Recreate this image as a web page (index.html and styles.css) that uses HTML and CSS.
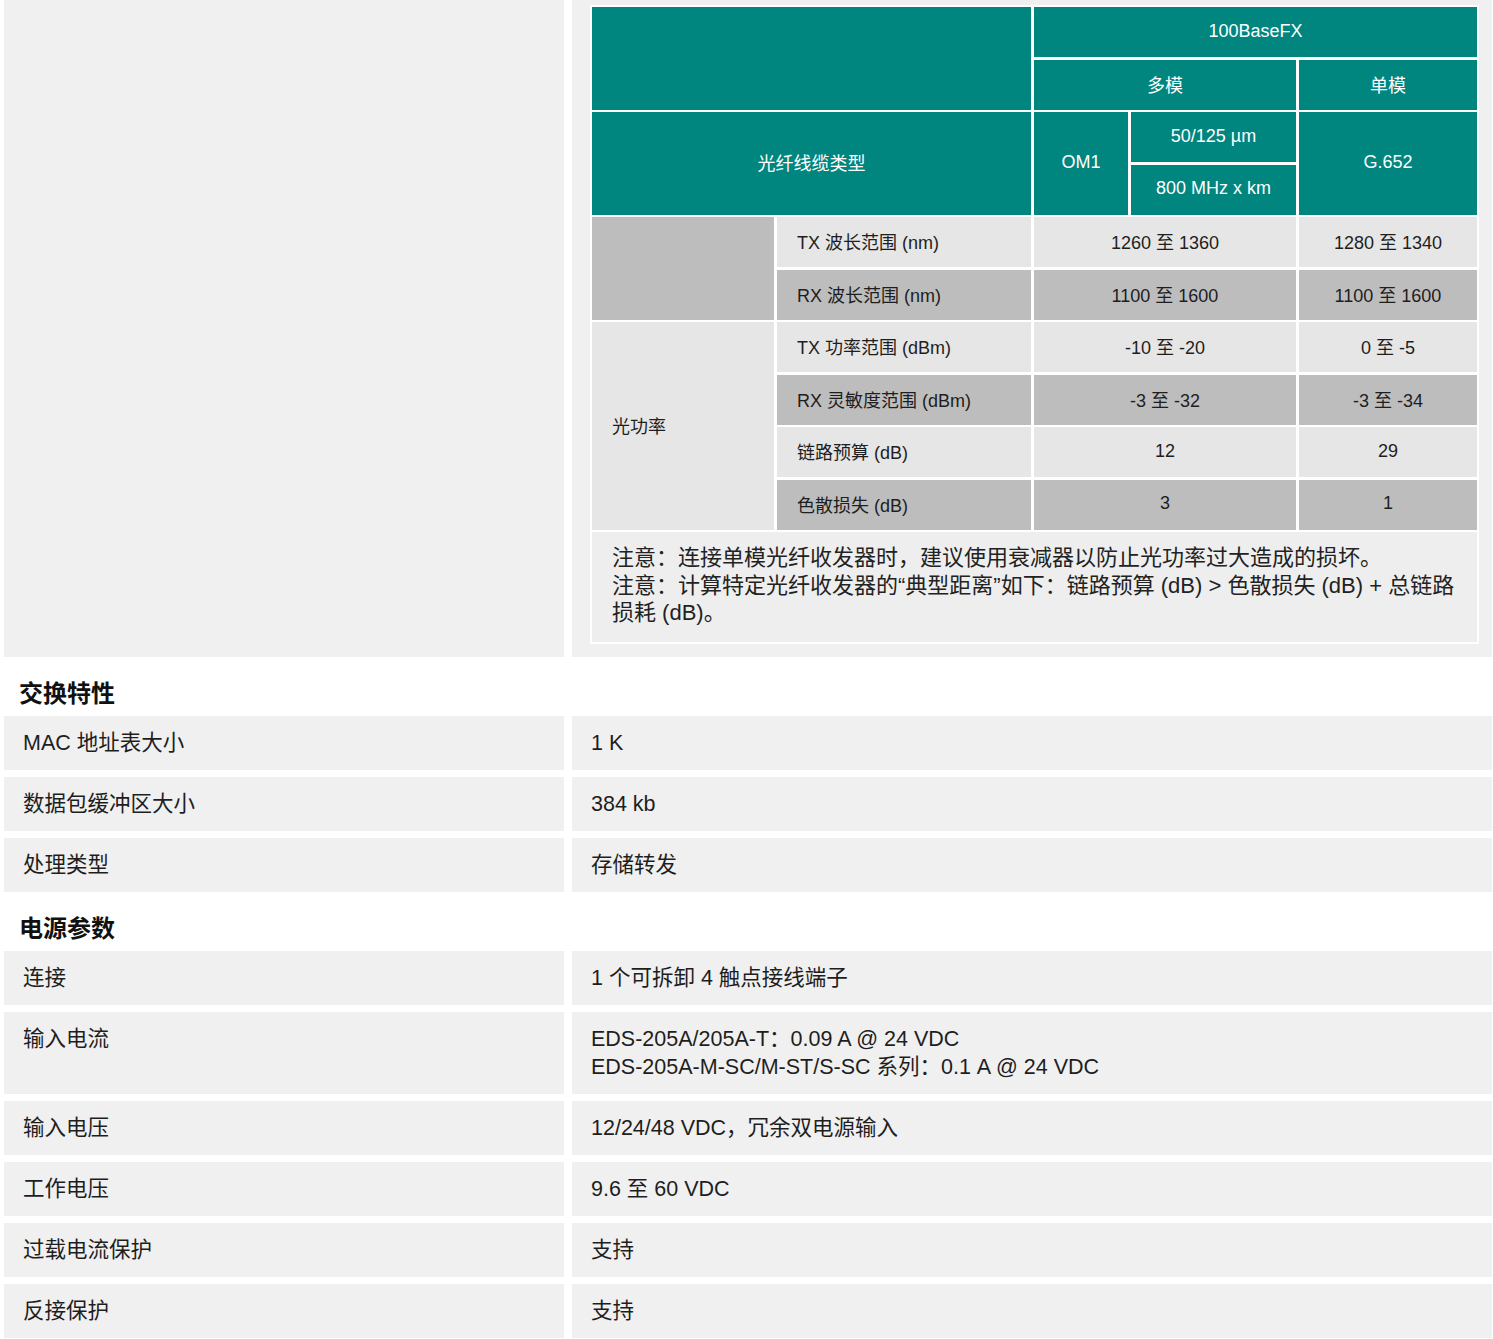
FILE: index.html
```html
<!DOCTYPE html>
<html lang="zh-CN">
<head>
<meta charset="utf-8">
<title>EDS-205A 规格</title>
<link rel="stylesheet" href="styles.css">
</head>
<body>
<div class="page">
  <section class="spec-top">
    <div class="cell key-cell"></div>
    <div class="cell val-cell">
      <div class="fx-table">
        <div class="th c2 r2"></div>
        <div class="th c3">100BaseFX</div>
        <div class="th c2">多模</div>
        <div class="th">单模</div>
        <div class="th c2 r2">光纤线缆类型</div>
        <div class="th r2">OM1</div>
        <div class="th">50/125 µm</div>
        <div class="th r2">G.652</div>
        <div class="th">800 MHz x km</div>

        <div class="td dark r2"></div>
        <div class="td light lbl">TX 波长范围 (nm)</div>
        <div class="td light c2">1260 至 1360</div>
        <div class="td light">1280 至 1340</div>
        <div class="td dark lbl">RX 波长范围 (nm)</div>
        <div class="td dark c2">1100 至 1600</div>
        <div class="td dark">1100 至 1600</div>

        <div class="td light r4 lbl">光功率</div>
        <div class="td light lbl">TX 功率范围 (dBm)</div>
        <div class="td light c2">-10 至 -20</div>
        <div class="td light">0 至 -5</div>
        <div class="td dark lbl">RX 灵敏度范围 (dBm)</div>
        <div class="td dark c2">-3 至 -32</div>
        <div class="td dark">-3 至 -34</div>
        <div class="td light lbl">链路预算 (dB)</div>
        <div class="td light c2">12</div>
        <div class="td light">29</div>
        <div class="td dark lbl">色散损失 (dB)</div>
        <div class="td dark c2">3</div>
        <div class="td dark">1</div>

        <div class="note c5">注意：连接单模光纤收发器时，建议使用衰减器以防止光功率过大造成的损坏。<br>注意：计算特定光纤收发器的“典型距离”如下：链路预算 (dB) &gt; 色散损失 (dB) + 总链路损耗 (dB)。</div>
      </div>
    </div>
  </section>

  <section class="group">
    <h2 class="group-title">交换特性</h2>
    <div class="rows">
      <div class="row"><div class="k">MAC 地址表大小</div><div class="v">1 K</div></div>
      <div class="row"><div class="k">数据包缓冲区大小</div><div class="v">384 kb</div></div>
      <div class="row"><div class="k">处理类型</div><div class="v">存储转发</div></div>
    </div>
  </section>

  <section class="group">
    <h2 class="group-title">电源参数</h2>
    <div class="rows">
      <div class="row"><div class="k">连接</div><div class="v">1 个可拆卸 4 触点接线端子</div></div>
      <div class="row"><div class="k">输入电流</div><div class="v">EDS-205A/205A-T：0.09 A @ 24 VDC<br>EDS-205A-M-SC/M-ST/S-SC 系列：0.1 A @ 24 VDC</div></div>
      <div class="row"><div class="k">输入电压</div><div class="v">12/24/48 VDC，冗余双电源输入</div></div>
      <div class="row"><div class="k">工作电压</div><div class="v">9.6 至 60 VDC</div></div>
      <div class="row"><div class="k">过载电流保护</div><div class="v">支持</div></div>
      <div class="row"><div class="k">反接保护</div><div class="v">支持</div></div>
    </div>
  </section>
</div>
</body>
</html>
```

FILE: styles.css
```css
* { box-sizing: border-box; }

html, body {
  margin: 0;
  padding: 0;
  background: #ffffff;
}

body {
  font-family: "Liberation Sans", "Noto Sans CJK SC", sans-serif;
  color: #1e1e1e;
}

.page {
  width: 1493px;
  padding-left: 4px;
}

/* top fibre section */
.spec-top {
  display: grid;
  grid-template-columns: 560px 920px;
  column-gap: 8px;
}

.cell {
  background: #f0f0f0;
}

.val-cell {
  padding: 7px 15px 15px 20px;
}

.fx-table {
  display: grid;
  grid-template-columns: 182px 254px 94px 165px 178px;
  grid-template-rows: repeat(10, 50px) auto;
  column-gap: 3px;
  row-gap: 2.5px;
  background: #ffffff;
  outline: 2px solid #ffffff;
  font-size: 18px;
}

.c2 { grid-column: span 2; }
.c3 { grid-column: span 3; }
.c5 { grid-column: span 5; }
.r2 { grid-row: span 2; }
.r4 { grid-row: span 4; }

.th {
  background: #00857f;
  color: #ffffff;
  display: flex;
  align-items: center;
  justify-content: center;
  padding-bottom: 2px;
}

.td {
  display: flex;
  align-items: center;
  justify-content: center;
  color: #1e1e1e;
  padding-bottom: 2px;
}

.td.lbl {
  justify-content: flex-start;
  padding-left: 20px;
}

.light { background: #e6e6e6; }
.dark { background: #bdbdbd; }

.note {
  background: #eeeeee;
  padding: 12px 20px 15px 20px;
  font-size: 22px;
  line-height: 27.5px;
  color: #222222;
}

/* spec groups */
.group-title {
  margin: 0;
  padding: 22px 0 7px 15px;
  font-size: 24px;
  line-height: 30px;
  font-weight: bold;
  color: #111111;
}

.rows {
  display: flex;
  flex-direction: column;
  gap: 7px;
}

.row {
  display: grid;
  grid-template-columns: 560px 920px;
  column-gap: 8px;
}

.k, .v {
  background: #f0f0f0;
  padding: 13px 19px;
  font-size: 21.5px;
  line-height: 28px;
}
```
